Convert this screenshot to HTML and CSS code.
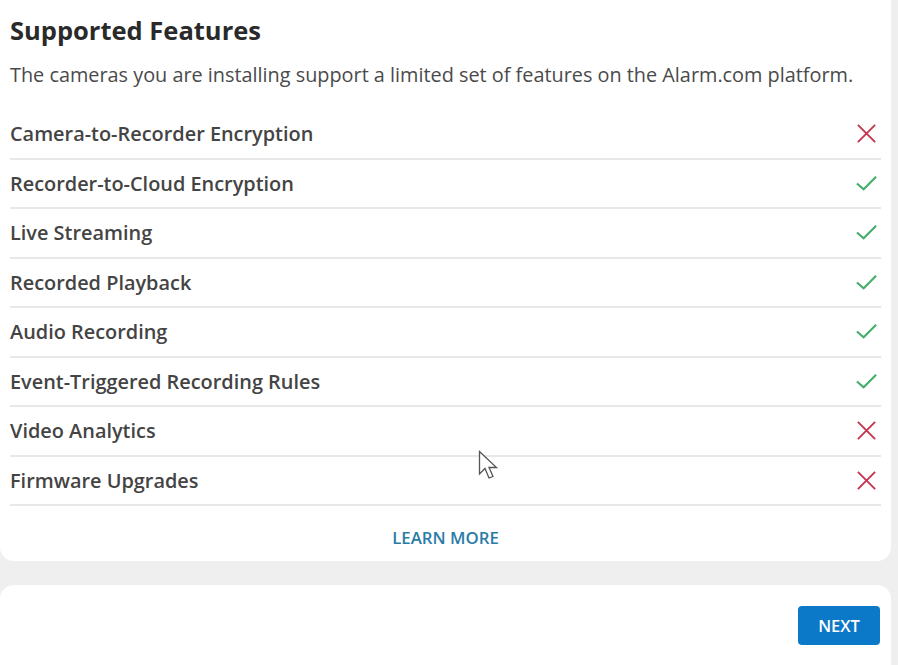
FILE: index.html
```html
<!DOCTYPE html>
<html lang="en">
<head>
    <meta charset="UTF-8">
    <meta name="viewport" content="width=device-width, initial-scale=1.0">
    <title>Supported Features</title>
    <link rel="stylesheet" href="styles.css">
</head>
<body>
    <div class="panel">
        <h1>Supported Features</h1>
        <p class="intro">The cameras you are installing support a limited set of features on the Alarm.com platform.</p>

        <ul class="features">
            <li><span>Camera-to-Recorder Encryption</span><svg class="icon no" viewBox="0 0 24 24"><path d="M3 3L21 21M21 3L3 21"/></svg></li>
            <li><span>Recorder-to-Cloud Encryption</span><svg class="icon yes" viewBox="0 0 24 24"><path d="M2 12L9 18L22 5"/></svg></li>
            <li><span>Live Streaming</span><svg class="icon yes" viewBox="0 0 24 24"><path d="M2 12L9 18L22 5"/></svg></li>
            <li><span>Recorded Playback</span><svg class="icon yes" viewBox="0 0 24 24"><path d="M2 12L9 18L22 5"/></svg></li>
            <li><span>Audio Recording</span><svg class="icon yes" viewBox="0 0 24 24"><path d="M2 12L9 18L22 5"/></svg></li>
            <li><span>Event-Triggered Recording Rules</span><svg class="icon yes" viewBox="0 0 24 24"><path d="M2 12L9 18L22 5"/></svg></li>
            <li><span>Video Analytics</span><svg class="icon no" viewBox="0 0 24 24"><path d="M3 3L21 21M21 3L3 21"/></svg></li>
            <li><span>Firmware Upgrades</span><svg class="icon no" viewBox="0 0 24 24"><path d="M3 3L21 21M21 3L3 21"/></svg></li>
        </ul>

        <a class="learn-more" href="#">LEARN MORE</a>
    </div>

    <div class="footer">
        <button class="next">NEXT</button>
    </div>

    <!-- mouse pointer captured in the screenshot -->
    <svg class="cursor" viewBox="0 0 22 32"><path d="M1.5 1.5V24L7 18.5L11 28L15 26.5L11 17.5H18.5Z"/></svg>
</body>
</html>
```

FILE: styles.css
```css
body {
    margin: 0;
    background-color: #efefef;
    font-family: "Open Sans", "Noto Sans", sans-serif;
    color: #333;
    position: relative;
    height: 665px;
    overflow: hidden;
}

.panel {
    width: 891px;
    background-color: #fff;
    border-radius: 0 0 14px 14px;
    padding: 14px 0 12px;
    box-sizing: border-box;
}

h1 {
    margin: 0 0 0 10px;
    font-size: 25.5px;
    font-weight: 700;
    color: #2a2a2a;
    line-height: 33px;
}

.intro {
    margin: 12px 0 0 10px;
    font-size: 19.85px;
    color: #4a4a4a;
    line-height: 32px;
    white-space: nowrap;
}

.features {
    list-style: none;
    margin: 19px 10px 0 10px;
    padding: 0;
}

.features li {
    display: flex;
    align-items: center;
    justify-content: space-between;
    height: 47.5px;
    border-bottom: 2px solid #e8e8e8;
    font-size: 19.9px;
    font-weight: 600;
    color: #444;
}

.icon {
    width: 23px;
    height: 23px;
    margin-right: 3px;
    fill: none;
    stroke-width: 2;
}

.icon.no {
    stroke: #c4374f;
}

.icon.yes {
    stroke: #45ad6a;
    stroke-width: 2.2;
    width: 25px;
    margin-right: 2px;
}

.learn-more {
    display: block;
    width: max-content;
    margin: 20px auto 0;
    font-size: 16.8px;
    font-weight: 600;
    color: #2a7ca6;
    text-decoration: none;
}

.footer {
    margin-top: 24px;
    width: 891px;
    height: 80px;
    background-color: #fff;
    border-radius: 14px 14px 0 0;
    display: flex;
    justify-content: flex-end;
    align-items: center;
    padding-right: 11px;
    box-sizing: border-box;
}

.next {
    width: 82px;
    height: 39px;
    border: none;
    border-radius: 4px;
    background-color: #0b78c8;
    color: #fff;
    font-family: inherit;
    font-size: 16.5px;
    font-weight: 600;
    cursor: pointer;
}

.cursor {
    position: absolute;
    left: 478px;
    top: 450px;
    width: 22px;
    height: 32px;
    fill: #fff;
    stroke: #555;
    stroke-width: 1.3;
}
```
